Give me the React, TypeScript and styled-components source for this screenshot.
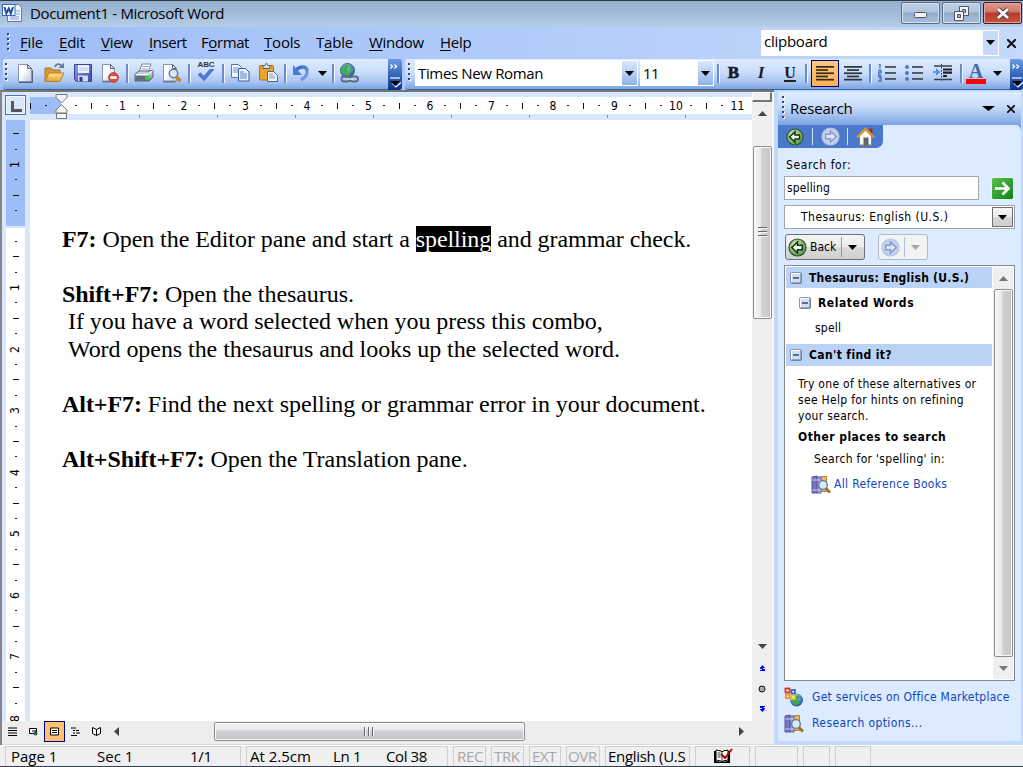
import React from "react";
import styled, { createGlobalStyle, css } from "styled-components";

const ui = `"Open Sans", "Noto Sans", sans-serif`;
const tahoma = `"DejaVu Sans Condensed", "DejaVu Sans", sans-serif`;

const Global = createGlobalStyle`
  *{box-sizing:border-box}
  body{margin:0;overflow:hidden;background:#efefef;color:#000}
  svg{display:block;flex:none}
`;

const Window = styled.div`
  width:1023px;height:767px;display:flex;flex-direction:column;overflow:hidden;font-family:${ui};
  white-space:nowrap;
`;

/* ---------- shared pieces ---------- */
const Cell = styled.div<{ $w: number; $start?: boolean }>`
  width:${p => p.$w}px;flex:none;height:100%;display:flex;align-items:center;justify-content:${p => (p.$start ? "flex-start" : "center")};
`;
const Spacer = styled.div`flex:1;`;
const Label = styled.span<{ $size?: number; $ls?: number; $x?: number; $w?: number; $color?: string; $bold?: boolean }>`
  font-size:${p => p.$size ?? 15}px;letter-spacing:${p => p.$ls ?? 0}px;
  ${p => p.$x !== undefined && css`margin-left:${p.$x}px;`}
  ${p => p.$w !== undefined && css`width:${p.$w}px;flex:none;`}
  ${p => p.$color && css`color:${p.$color};`}
  ${p => p.$bold && css`font-weight:bold;`}
`;
const Caret = ({ w = 9, c = "#000" }: { w?: number; c?: string }) => (
  <svg width={w} height={5} viewBox="0 0 10 5" preserveAspectRatio="none"><path d="M0 0h10L5 5z" fill={c} /></svg>
);
const Grip = ({ n = 4 }: { n?: number }) => (
  <svg width={4} height={n * 5} viewBox={`0 0 4 ${n * 5}`}>
    {Array.from({ length: n }, (_, i) => (
      <g key={i}><rect x={1} y={i * 5 + 1} width={2} height={2} fill="#fff" /><rect x={0} y={i * 5} width={2} height={2} fill="#27418f" /></g>
    ))}
  </svg>
);

/* ---------- title bar ---------- */
const TitleBar = styled.header`
  height:27px;flex:none;display:flex;align-items:flex-start;border-top:1px solid #343a44;
  background:linear-gradient(#96b0cf,#a0bad8 45%,#b5cee8);padding:0 1px 0 2px;
`;
const TitleText = styled.span`font-size:15px;line-height:25px;margin-left:8px;letter-spacing:-.33px;`;
const CaptionButton = styled.div<{ $close?: boolean }>`
  width:39px;height:22px;margin:1px 0 0 2px;border:1px solid ${p => (p.$close ? "#4a1420" : "#5b6c84")};border-radius:2px;
  box-shadow:inset 0 0 0 1px ${p => (p.$close ? "#e6a79c" : "#d2e0ef")};
  display:flex;align-items:center;justify-content:center;
  background:${p => p.$close
    ? "linear-gradient(#dc9a8c,#cf7767 45%,#b8392a 50%,#c4553f)"
    : "linear-gradient(#bfd0e4,#afc4dc 45%,#92abc9 50%,#a6bfdc)"};
`;

/* ---------- menu bar ---------- */
const MenuBar = styled.nav`
  height:32px;flex:none;display:flex;align-items:center;padding-left:7px;
  background:linear-gradient(90deg,#9ebdf7,#c5dafb);
`;
const MenuItem = styled.span<{ $w: number; $ls: number }>`
  width:${p => p.$w}px;font-size:15px;letter-spacing:${p => p.$ls}px;line-height:30px;margin-top:-2px;
  u{text-underline-offset:2px;text-decoration-thickness:1px;text-decoration-skip-ink:none}
`;
const AskBox = styled.div`
  width:238px;height:26px;background:#fff;display:flex;align-items:center;border:1px solid #fff;padding-left:2px;margin-top:-1px;
  span{margin-top:-3px}
`;
const DropPart = styled.div<{ $flat?: boolean }>`
  width:15px;height:100%;display:flex;align-items:center;justify-content:center;
  background:${p => (p.$flat ? "#c6dafa" : "linear-gradient(#dbe9fd,#8fb3ea)")};
`;

/* ---------- toolbars ---------- */
const ToolbarRow = styled.div`
  height:31px;flex:none;display:flex;background:linear-gradient(90deg,#9ebdf7,#c5dafb);padding-left:3px;
`;
const Toolbar = styled.div<{ $w: number; $gap?: number }>`
  width:${p => p.$w}px;height:31px;margin-left:${p => p.$gap ?? 0}px;display:flex;align-items:center;border-radius:3px 0 0 3px;padding-bottom:2px;
  background:linear-gradient(#dfecff,#c9dcfa 45%,#a9c5f1 75%,#7ca4e0);border-bottom:1px solid #3b619c;
`;
const Overflow = styled.div<{ $w: number }>`
  width:${p => p.$w}px;height:31px;background:linear-gradient(#6c9be8,#3566ba 50%,#07328f);border-radius:0 3px 3px 0;
  display:flex;justify-content:center;
`;
const Sep = styled.div<{ $w: number }>`
  width:${p => p.$w}px;flex:none;height:19px;display:flex;justify-content:center;
  &::before{content:"";width:2px;height:100%;background:#6a8ccb;border-right:1px solid #f1f6ff;}
`;
const ComboBox = styled.div<{ $w: number }>`
  width:${p => p.$w}px;height:26px;background:#fff;border:1px solid #fff;display:flex;align-items:center;padding-left:2px;
  span{margin-top:-1px}
`;
const Pressed = styled(Cell)`
  height:27px;border:1px solid #000080;background:linear-gradient(#fdc982,#fdb055);
`;
const Letter = styled.span<{ $kind: "b" | "i" | "u" | "a" }>`
  font:bold 17px/20px "Liberation Serif",serif;color:#1c1c1c;
  ${p => p.$kind === "b" && css`-webkit-text-stroke:.6px #1c1c1c;`}
  ${p => p.$kind === "i" && css`font-style:italic;`}
  ${p => p.$kind === "u" && css`border-bottom:2px solid #222;line-height:14px;font-size:16px;margin-top:2px;`}
  ${p => p.$kind === "a" && css`font-size:20px;line-height:15px;color:#4468a8;border-bottom:5px solid #f00;padding:0 3px;margin-top:2px;`}
`;

const Overflower = ({ w }: { w: number }) => (
  <Overflow $w={w}>
    <svg width={12} height={31} viewBox="0 0 12 31">
      <path d="M1.500 5.500l2 2-2 2M5.500 5.500l2 2-2 2" fill="none" stroke="#fff" strokeWidth={1.400} />
      <path d="M1 19h10" stroke="#fff" strokeWidth={1.200} /><path d="M3 24l4 4 5-4.500" stroke="#fff" fill="none" strokeWidth={1.200} /><path d="M1 22h10l-5 5z" fill="#000" />
    </svg>
  </Overflow>
);

const Svg = ({ w = 22, h = 22, children }: { w?: number; h?: number; children: React.ReactNode }) => (
  <svg width={w} height={h} viewBox={`0 0 ${w} ${h}`}>{children}</svg>
);
const DefsSvg = styled.svg`position:absolute;`;
const Defs = () => (
  <DefsSvg width={0} height={0}>
    <defs>
      <linearGradient id="pg" x1="0" y1="0" x2="1" y2="1"><stop offset=".4" stopColor="#fff" /><stop offset="1" stopColor="#b9c9e4" /></linearGradient>
      <linearGradient id="fold" x1="0" y1="0" x2="0" y2="1"><stop offset="0" stopColor="#ffe38f" /><stop offset="1" stopColor="#e2a02d" /></linearGradient>
      <linearGradient id="sv" x1="0" y1="0" x2="1" y2="1"><stop offset="0" stopColor="#8e9df0" /><stop offset="1" stopColor="#3b47ab" /></linearGradient>
      <linearGradient id="gr" x1="0" y1="0" x2="1" y2="1"><stop offset="0" stopColor="#5fc154" /><stop offset="1" stopColor="#068315" /></linearGradient>
      <linearGradient id="metal" x1="0" y1="0" x2="0" y2="1"><stop offset="0" stopColor="#e8ebf1" /><stop offset="1" stopColor="#717b8e" /></linearGradient>
      <linearGradient id="undo" x1="0" y1="0" x2="1" y2="1"><stop offset="0" stopColor="#2f65cc" /><stop offset="1" stopColor="#7ea7ea" /></linearGradient>
      <radialGradient id="ball" cx=".4" cy=".35" r=".7"><stop offset="0" stopColor="#d4efba" /><stop offset="1" stopColor="#4a9640" /></radialGradient>
      <radialGradient id="globe" cx=".4" cy=".3" r=".7"><stop offset="0" stopColor="#9ed2f5" /><stop offset="1" stopColor="#2457a5" /></radialGradient>
    </defs>
  </DefsSvg>
);

const NewIcon = () => (
  <Svg><path d="M5 20h13V8" fill="none" stroke="#4c5a74" strokeWidth={1.800} /><path d="M4.500 2.500h9l4 4v13h-13z" fill="url(#pg)" stroke="#8793ac" /><path d="M13.500 2.500v4h4z" fill="#dfe7f3" stroke="#56637b" /></Svg>
);
const OpenIcon = () => (
  <Svg><path d="M2 19V6h6l2 2h7v11z" fill="#d69a32" stroke="#a97724" /><path d="M2 19.500L6 11h15l-4 8.500z" fill="url(#fold)" stroke="#b58029" />
    <path d="M12 5c1-3.500 5-4 7 0" fill="none" stroke="#617ba8" strokeWidth={1.800} /><path d="M15.500 6h5.500V.8z" fill="#617ba8" /></Svg>
);
const SaveIcon = () => (
  <Svg><path d="M2.500 2.500h17v17h-15l-2-2z" fill="url(#sv)" stroke="#3a4394" /><rect x={6} y={3} width={11} height={8} fill="#eef1fd" /><path d="M7 6h9M7 8h9" stroke="#bdc4e6" /><rect x={6} y={13.500} width={10} height={6} fill="#d7daea" /><rect x={7.500} y={15} width={3} height={4.500} fill="#30398d" /></Svg>
);
const PermissionIcon = () => (
  <Svg><path d="M3.500 19.500h8" stroke="#4c5a74" strokeWidth={1.800} /><path d="M3.500 2.500h8l4 4v12.500h-12z" fill="url(#pg)" stroke="#8793ac" /><path d="M11.500 2.500v4h4z" fill="#dfe7f3" stroke="#56637b" /><circle cx={14.500} cy={15.500} r={4.800} fill="#e1513a" stroke="#a83426" /><rect x={11.200} y={14.300} width={6.600} height={2.500} fill="#fff" /></Svg>
);
const PrintIcon = () => (
  <Svg><path d="M6 10L9 2h9l-3 8z" fill="#f8fafd" stroke="#7b86a0" /><path d="M9.500 4.500h6M8.500 7h6" stroke="#93a2c2" /><path d="M2 12l4-3h11l3-1v7l-4 4H2z" fill="url(#metal)" stroke="#555f74" /><path d="M2.500 12.500h13l4-4" stroke="#fff" fill="none" /><rect x={3} y={14} width={12.500} height={4.500} fill="#646e80" /><rect x={12} y={14.500} width={4} height={3} fill="#2ae01c" /></Svg>
);
const PreviewIcon = () => (
  <Svg><path d="M2.500 19.500h12" stroke="#4c5a74" strokeWidth={1.800} /><path d="M2.500 2.500h9l4 4v12.500h-13z" fill="url(#pg)" stroke="#8793ac" /><path d="M11.500 2.500v4h4z" fill="#dfe7f3" stroke="#56637b" /><circle cx={12.500} cy={11.500} r={4.200} fill="#d9ebfa" stroke="#6f7c90" strokeWidth={1.500} /><path d="M15.500 15l4 4" stroke="#c88428" strokeWidth={3.500} /></Svg>
);
const Abc = styled.span`font:bold 8px/8px "Liberation Sans",sans-serif;letter-spacing:-.1px;color:#333;margin-top:-3px;`;
const SpellWrap = styled.div`display:flex;flex-direction:column;align-items:center;`;
const SpellIcon = () => (
  <SpellWrap><Abc>ABC</Abc><svg width={20} height={13} viewBox="0 0 20 13"><path d="M3 4.500l5 5L17 -1" fill="none" stroke="#4979d2" strokeWidth={3.600} /></svg></SpellWrap>
);
const CopyIcon = () => (
  <Svg><path d="M2.500 2.500h7l3 3v10h-10z" fill="#eff5ff" stroke="#5877b5" /><path d="M4 6h5M4 8h6M4 10h6" stroke="#7193d0" /><path d="M9.500 6.500h7l3.500 3.500v9h-10.500z" fill="#eaf2ff" stroke="#385ba5" /><path d="M11 10h4M11 12h7M11 14h7M11 16h7" stroke="#5a80c4" /></Svg>
);
const PasteIcon = () => (
  <Svg><rect x={2.500} y={3.500} width={14} height={14.500} rx={1} fill="#eaa629" stroke="#a7701c" /><path d="M6 6.500h7V3.500h-2L9.500 1 8 3.500H6z" fill="#dcdfe8" stroke="#56637b" /><path d="M10.500 9.500h6l4 4v6h-10z" fill="#eff3fb" stroke="#59647a" /><path d="M12 12h4M12 14h6M12 16h6" stroke="#8e9cb8" /></Svg>
);
const UndoIcon = () => <Svg><path d="M5 8c4-4 10-4 11 0s-2 8-6 10" fill="none" stroke="url(#undo)" strokeWidth={3.400} /><path d="M2 3v10h9z" fill="#4b7ddb" /></Svg>;
const LinkIcon = () => (
  <Svg><circle cx={9.500} cy={8.500} r={7} fill="url(#globe)" stroke="#326396" /><path d="M4 6c3-4 6-4 7-2l-2 4 3 3-2 4-4-4-3-1zM12.500 4l3 4-2 2-2-2z" fill="#44af45" /><rect x={3.500} y={14.500} width={8} height={5} rx={2.500} fill="none" stroke="#5d6b80" strokeWidth={1.800} /><rect x={12} y={14.500} width={8} height={5} rx={2.500} fill="none" stroke="#5d6b80" strokeWidth={1.800} /><path d="M9 17h6" stroke="#dbe3ee" strokeWidth={1.500} /></Svg>
);
const Lines = ({ center }: { center?: boolean }) => (
  <Svg w={18} h={17}>{[0, 1, 2, 3, 4].map(i => {
    const w = i % 2 ? 12 : 18;
    return <rect key={i} x={center ? (18 - w) / 2 : 0} y={1 + i * 3.200} width={w} height={1.700} fill={center ? "#2c3038" : "#3a2b18"} />;
  })}</Svg>
);
const ListIcon = ({ numbered }: { numbered?: boolean }) => (
  <Svg w={18} h={18}>{[2, 8, 14].map((y, i) => (
    <g key={y}><rect x={7} y={y + .2} width={11} height={1.500} fill="#333" />
      {numbered ? <path d={i === 0 ? "M.5 0h1.500v4.500" : i === 1 ? "M0 6.500h3v2H.5v2.500H3" : "M0 12.500h3v4.500H0M1 14.500h2"} fill="none" stroke="#4f74bb" strokeWidth={1.400} /> : <circle cx={2} cy={y + 1} r={1.900} fill="#4f74bb" />}</g>
  ))}</Svg>
);
const IndentIcon = () => (
  <Svg w={20} h={18}><path d="M1 2h18M1 15.500h18" stroke="#3a3f49" strokeWidth={1.500} /><path d="M10 5.500h9M10 8.700h9M10 12h4" stroke="#222" strokeWidth={2.200} /><path d="M8.500 0v18" stroke="#333" strokeDasharray="1.500 1.500" /><path d="M0 7h3V4l4.500 4-4.500 4V9H0z" fill="#5e8fe0" /></Svg>
);
const WordLogo = () => (
  <svg width={20} height={22} viewBox="0 0 20 22"><path d="M5.500 3.500h11l3 3v14h-14z" fill="#eef4fd" stroke="#5d7cae" /><path d="M8 16h9M8 18h9M14 10h4M14 13h4" stroke="#7ea0d2" /><rect x={.5} y={3.500} width={12.500} height={11} fill="#fff" stroke="#3c65b4" /><path d="M2.500 6l1.800 6.500L6.800 7.500 8.800 12.500l2.200-6.500" fill="none" stroke="#2450a4" strokeWidth={2} /></svg>
);

/* ---------- work area ---------- */
const Work = styled.div`height:655px;flex:none;display:flex;background:#c1d9fb;`;
const DocFrame = styled.section`
  width:774px;display:flex;flex-direction:column;border-top:2px solid #76756f;border-left:2px solid #85858a;background:#d8e7fc;
`;
const DocMain = styled.div`display:flex;height:629px;`;
const DocColumn = styled.div`width:750px;display:flex;flex-direction:column;`;
const RulerRow = styled.div`height:28px;display:flex;padding:3px 0 0 3px;align-items:flex-start;`;
const TabBox = styled.div`
  width:21px;height:20px;border:1px solid #4a72c4;box-shadow:inset 0 0 0 1px #f4f8ff;display:flex;align-items:center;justify-content:center;padding:3px 0 0 1px;
  &::before{content:"";width:8px;height:8px;border-left:3px solid #555;border-bottom:3px solid #555}
`;
const HRulerWrap = styled.div`width:722px;margin-left:4px;`;
const HRuler = styled.div`
  height:17px;margin-top:2px;display:flex;overflow:hidden;background:linear-gradient(90deg,#9ebdf7 31px,#fff 31px);
  &>:first-child{margin-left:-7.500px}
  span{margin-top:1px}
`;
const Mark = styled.div<{ $v?: boolean }>`
  flex:none;display:flex;align-items:center;justify-content:center;font:12px/15px ${tahoma};font-stretch:condensed;
  ${p => (p.$v ? "height:15.4px;width:19px;" : "width:15.375px;height:17px;")}
  span{${p => p.$v && "transform:rotate(-90deg);"}}
`;
const Dot = styled.i`width:2px;height:1px;background:#222;`;
const Tick = styled.i<{ $v?: boolean }>`background:#111;${p => (p.$v ? "width:6px;height:1px;" : "width:1px;height:6px;")}`;
const TabTicks = styled.div`height:3px;margin-top:1px;background:repeating-linear-gradient(90deg,#8b8f98 0 1px,transparent 1px 78px);margin-left:109px;`;
const IndentMark = styled.div`position:absolute;left:55px;top:93px;`;
const DocBody = styled.div`display:flex;height:601px;background:#fff;`;
const VRuler = styled.div`
  width:28px;height:601px;overflow:hidden;border-left:4px solid #d8e7fc;border-right:5px solid #d8e7fc;flex:none;
  background:linear-gradient(#9ebdf7 106px,#d8e7fc 106px 108px,#fff 108px);padding-top:6px;
`;
const PageArea = styled.article`
  padding:105.500px 0 0 32px;font:24px/27.500px "Liberation Serif",serif;
`;
const Line = styled.p<{ $indent?: boolean }>`
  margin:0;height:27.500px;letter-spacing:-.06px;padding-left:${p => (p.$indent ? 6 : 0)}px;
`;
const Selected = styled.span`background:#000;color:#fff;`;

const VScroll = styled.div`
  width:22px;height:100%;background:#efefef;display:flex;flex-direction:column;align-items:center;border-right:2px solid #f7f7f7;
`;
const SplitBox = styled.div`width:20px;height:11px;border:1px solid #fff;border-right:2px solid #777;border-bottom:2px solid #777;background:#efefef;`;
const Slot = styled.div<{ $h: number }>`height:${p => p.$h}px;display:flex;align-items:center;justify-content:center;flex:none;`;
const Thumb = styled.div<{ $w: number; $h: number; $vertical?: boolean }>`
  width:${p => p.$w}px;height:${p => p.$h}px;border:1px solid #8d8d8f;border-radius:2px;display:flex;align-items:center;justify-content:center;flex:none;
  background:linear-gradient(${p => (p.$vertical ? "90deg" : "180deg")},#f5f5f5,#e9e9eb 40%,#d1d2d5 45%,#c4c5ca);
  box-shadow:inset 0 0 0 1px #fafafa;
`;
const Ridge = styled.div<{ $vertical?: boolean }>`
  ${p => (p.$vertical ? "width:9px;height:11px;" : "width:11px;height:9px;")}
  background:repeating-linear-gradient(${p => (p.$vertical ? "180deg" : "90deg")},#66686c 0 1px,#f6f6f6 1px 2px,transparent 2px 4px);
`;
const BottomBar = styled.div`height:24px;display:flex;align-items:center;background:#ededed;padding-bottom:2px;width:772px;border-bottom:1px solid #dadada;`;
const ViewCell = styled.div<{ $on?: boolean }>`
  width:21px;height:21px;display:flex;align-items:center;justify-content:center;
  ${p => p.$on && css`border:1px solid #000080;background:#ffc06f;`}
`;
const BrowseMark = ({ down }: { down?: boolean }) => (
  <svg width={5} height={6} viewBox="0 0 5 6"><path d={down ? "M0 0h5v1H3.500v1H5L2.500 6 0 3.500V3h2V2H0zM0 3h5L2.500 6z" : "M2.500 0L5 3H3v1h2v2H0V5h2V4H0V3z"} fill="#00e" /></svg>
);

const Marks = ({ from, to, v }: { from: number; to: number; v?: boolean }) => (
  <>{Array.from({ length: to - from + 1 }, (_, i) => {
    const k = from + i, m = Math.abs(k) % 4;
    return <Mark key={k} $v={v}>{k === 0 ? null : m === 0 ? <span>{Math.abs(k / 4)}</span> : m === 2 ? <Tick $v={v} /> : <Dot />}</Mark>;
  })}</>
);

/* ---------- research pane ---------- */
const Pane = styled.aside`
  width:243px;margin:2px 0 0 4px;height:649px;background:#dcebff;display:flex;flex-direction:column;font-family:${tahoma};font-stretch:condensed;font-size:12px;
`;
const PaneHead = styled.div`
  height:33px;display:flex;align-items:center;padding:0 6px 0 4px;background:linear-gradient(#dfecff,#c8dcfa 45%,#7ba3e0);flex:none;
`;
const PaneTitle = styled.span`font:15px/20px ${ui};font-stretch:normal;letter-spacing:-.2px;margin:-1px 0 0 4px;`;
const PaneNavRow = styled.div`height:23px;flex:none;background:linear-gradient(#7ba3e0,#7ba3e0) top right/6px 6px no-repeat;&>div{border-top-right-radius:6px;background:#dcebff;height:23px}`;
const PaneNav = styled.div`&&{width:105px;height:23px;background:#4a79cb;border-radius:0 0 7px 0;display:flex;align-items:center;}`;
const NavSep = styled.div`width:1px;height:17px;background:#d6e4fb;`;
const PaneBody = styled.div`padding:0 6px;display:flex;flex-direction:column;height:593px;`;
const Row = styled.div<{ $h: number; $mt?: number; $pl?: number }>`
  display:flex;align-items:center;flex:none;height:${p => p.$h}px;margin-top:${p => p.$mt ?? 0}px;padding-left:${p => p.$pl ?? 0}px;
`;
const Field = styled.div<{ $w: number; $pl: number }>`
  width:${p => p.$w}px;height:24px;border:1px solid #a4a5a9;background:#fff;display:flex;align-items:center;padding:0 1px 0 ${p => p.$pl}px;
`;
const ComboButton = styled.div`
  width:21px;height:20px;border:1px solid #707070;background:linear-gradient(#f4f4f4,#ebebeb 48%,#d6d6d6 52%,#cfcfcf);display:flex;align-items:center;justify-content:center;
`;
const SplitButton = styled.div<{ $w: number; $off?: boolean }>`
  width:${p => p.$w}px;height:26px;border:1px solid ${p => (p.$off ? "#b4b8c0" : "#707070")};border-radius:3px;display:flex;align-items:center;
  background:${p => (p.$off ? "#f1f3f5" : "linear-gradient(#f4f4f4,#ececec 48%,#dadada 52%,#d0d0d0)")};padding-left:2px;
`;
const SplitLine = styled.div<{ $off?: boolean }>`width:1px;height:20px;background:${p => (p.$off ? "#b5c0d4" : "#7f9cc5")};`;
const Results = styled.div`width:231px;height:416px;border:1px solid #828790;background:#fff;margin-top:5px;display:flex;padding:1px;flex:none;`;
const ResultList = styled.div`width:206px;`;
const Band = styled(Row)`background:#bad2f5;padding-left:4px;`;
const Para = styled.p`margin:10px 0 0 12px;line-height:16px;white-space:pre;letter-spacing:.31px;`;
const ResultScroll = styled.div`width:20px;margin-left:1px;background:#efefef;display:flex;flex-direction:column;align-items:center;`;

const Collapse = () => (
  <svg width={12} height={12} viewBox="0 0 12 12"><rect x={.5} y={.5} width={11} height={11} rx={1.500} fill="#d3ddeb" stroke="#8496b0" /><path d="M11 1.500v9.500H1.500" fill="none" stroke="#5c7291" /><path d="M1.500 10V1.500H10" fill="none" stroke="#fff" /><path d="M3 6h6" stroke="#2c4a78" strokeWidth={1.500} /></svg>
);
const RoundArrow = ({ right, off, size = 19 }: { right?: boolean; off?: boolean; size?: number }) => (
  <svg width={size} height={size} viewBox="0 0 19 19"><circle cx={9.500} cy={9.500} r={8.500} fill={off ? "#c4d1ea" : "url(#ball)"} stroke={off ? "#b3c3e2" : "#33502f"} strokeWidth={1.200} />
    <path transform={right ? "matrix(-1 0 0 1 19 0)" : undefined} d="M3.800 9.500L9.500 4v3.300h4.800v4.400H9.500V15z" fill={off ? "#dfe8f7" : "#eff9e9"} stroke={off ? "#869cc9" : "#1d2c20"} strokeWidth={1.500} /></svg>
);
const HomeIcon = () => (
  <svg width={19} height={19} viewBox="0 0 19 19"><rect x={13.500} y={1.500} width={3} height={6} fill="#9c3023" /><path d="M3.500 9v9h12V9l-6-6z" fill="#fbfaf3" stroke="#9a834c" /><path d="M1 10.500l8.500-9 8.500 9" fill="none" stroke="#d9992c" strokeWidth={2} /><rect x={8} y={11} width={4} height={7} fill="#456a9e" stroke="#79613a" /></svg>
);
const GoIcon = () => (
  <svg width={23} height={23} viewBox="0 0 23 23"><rect x={.5} y={.5} width={22} height={22} rx={2} fill="url(#gr)" stroke="#eaf7e8" /><path d="M4 11.500h13M11.500 5.500l6 6-6 6" fill="none" stroke="#fff" strokeWidth={2.600} /></svg>
);
const BooksIcon = () => (
  <svg width={20} height={19} viewBox="0 0 20 19"><path d="M1 2l5-1v17H1z" fill="#7775c5" stroke="#54529b" /><path d="M6 2h4v16H6z" fill="#9997de" stroke="#605eac" /><path d="M10.500 1.500h5v15h-5z" fill="#e3bd5b" stroke="#a58438" /><path d="M1 5h9M1 15h9" stroke="#c7c6f2" /><circle cx={12} cy={10} r={4.300} fill="#d5ecf8" stroke="#65788e" strokeWidth={1.300} /><path d="M15 13.500l4 4" stroke="#a66f24" strokeWidth={3} /></svg>
);
const MarketIcon = () => (
  <svg width={20} height={20} viewBox="0 0 20 20"><circle cx={12.500} cy={13} r={6.500} fill="url(#globe)" /><path d="M8 12c3-4 6-4 8-2l-3 3 2 3-3 3-3-3z" fill="#45a83e" /><g fill="#fff" strokeWidth={1.800}><rect x={1.500} y={1.500} width={4} height={4} stroke="#e12b20" /><rect x={7.500} y={3} width={3.500} height={3.500} stroke="#3b66c5" /><rect x={2} y={7.500} width={3.500} height={3.500} stroke="#ee8e27" /><rect x={7.500} y={8.500} width={3.500} height={3.500} stroke="#e0c42e" /></g></svg>
);

/* ---------- status bar ---------- */
const StatusBar = styled.footer`
  height:22px;flex:none;display:flex;background:#efefef;border-top:1px solid #fff;border-bottom:1px solid #39404d;padding-left:5px;
`;
const StatusBox = styled.div<{ $w: number; $gap?: number; $off?: boolean }>`
  width:${p => p.$w}px;margin-right:5px;height:20px;border:1px solid #cfcfcf;border-bottom:0;display:flex;align-items:center;overflow:hidden;
  font-size:15px;padding-left:${p => p.$gap ?? 4}px;color:${p => (p.$off ? "#a6a6a6" : "#000")};
`;
const StatusText = styled.span<{ $w?: number; $ls?: number }>`width:${p => (p.$w ? p.$w + "px" : "auto")};letter-spacing:${p => p.$ls ?? -0.35}px;flex:none;line-height:18px;margin-top:-1px;`;

export default function App() {
  const link = "#0f46bd";
  const menus: [string, string, string, number, number][] = [
    ["", "F", "ile", 39, -0.2], ["", "E", "dit", 42, -0.2], ["", "V", "iew", 48, -0.3], ["", "I", "nsert", 52, -0.45], ["F", "o", "rmat", 63, -0.4],
    ["", "T", "ools", 52, -0.2], ["T", "a", "ble", 53, -0.2], ["", "W", "indow", 71, -0.3], ["", "H", "elp", 40, -0.3],
  ];
  return (
    <Window>
      <Global /><Defs />
      <TitleBar>
        <WordLogo /><TitleText>Document1 - Microsoft Word</TitleText><Spacer />
        <CaptionButton><svg width={13} height={10}><rect x={.5} y={4.500} width={12} height={5} rx={1} fill="#f5f5f5" stroke="#4d5564" /></svg></CaptionButton>
        <CaptionButton><svg width={15} height={15}><path d="M5.500.5h9v9h-9z" fill="#f4f4f4" stroke="#4d5564" /><path d="M8.500 3.500h3v3h-3z" fill="#9fb3cb" stroke="#4d5564" /><path d="M.5 5.500h9v9h-9z" fill="#f4f4f4" stroke="#4d5564" /><path d="M3.500 8.500h3v3h-3z" fill="#9fb3cb" stroke="#4d5564" /></svg></CaptionButton>
        <CaptionButton $close><svg width={16} height={13} viewBox="0 0 16 13"><path d="M3 2l10 9M13 2L3 11" stroke="#4e3b43" strokeWidth={4.800} /><path d="M3 2l10 9M13 2L3 11" stroke="#f7f7f7" strokeWidth={3} /></svg></CaptionButton>
      </TitleBar>
      <MenuBar>
        <Cell $w={13} $start><Grip n={4} /></Cell>
        {menus.map(([a, u, b, w, ls]) => <MenuItem key={u} $w={w} $ls={ls}>{a}<u>{u}</u>{b}</MenuItem>)}
        <Spacer />
        <AskBox><Label $ls={-.25}>clipboard</Label><Spacer /><DropPart $flat><Caret /></DropPart></AskBox>
        <Cell $w={24}><svg width={9} height={9}><path d="M0 0l9 9M9 0L0 9" stroke="#111" strokeWidth={2} /></svg></Cell>
      </MenuBar>
      <ToolbarRow>
        <Toolbar $w={385}>
          <Cell $w={8}><Grip /></Cell><Cell $w={28}><NewIcon /></Cell><Cell $w={30}><OpenIcon /></Cell><Cell $w={27}><SaveIcon /></Cell><Cell $w={28}><PermissionIcon /></Cell>
          <Sep $w={6} /><Cell $w={28}><PrintIcon /></Cell><Cell $w={28}><PreviewIcon /></Cell><Sep $w={6} /><Cell $w={28}><SpellIcon /></Cell><Sep $w={6} />
          <Cell $w={28}><CopyIcon /></Cell><Cell $w={28}><PasteIcon /></Cell><Sep $w={6} /><Cell $w={27}><UndoIcon /></Cell><Cell $w={14}><Caret /></Cell><Sep $w={8} /><Cell $w={24}><LinkIcon /></Cell>
        </Toolbar>
        <Overflower w={14} />
        <Toolbar $w={605} $gap={3}>
          <Cell $w={10}><Grip /></Cell>
          <ComboBox $w={223}><Label $ls={-.35}>Times New Roman</Label><Spacer /><DropPart><Caret /></DropPart></ComboBox>
          <Cell $w={2} />
          <ComboBox $w={74}><Label $ls={-.6}>11</Label><Spacer /><DropPart><Caret /></DropPart></ComboBox>
          <Sep $w={9} /><Cell $w={21}><Letter $kind="b">B</Letter></Cell><Cell $w={34}><Letter $kind="i">I</Letter></Cell><Cell $w={24}><Letter $kind="u">U</Letter></Cell><Sep $w={9} />
          <Pressed $w={28}><Lines /></Pressed><Cell $w={28}><Lines center /></Cell><Sep $w={7} /><Cell $w={26}><ListIcon numbered /></Cell><Cell $w={28}><ListIcon /></Cell><Cell $w={30}><IndentIcon /></Cell>
          <Sep $w={6} /><Cell $w={24}><Letter $kind="a">A</Letter></Cell><Cell $w={18}><Caret /></Cell>
        </Toolbar>
        <Overflower w={13} />
      </ToolbarRow>

      <Work>
        <DocFrame>
          <DocMain>
            <DocColumn>
              <RulerRow>
                <TabBox />
                <HRulerWrap><HRuler><Marks from={-2} to={44} /></HRuler><TabTicks /></HRulerWrap>
              </RulerRow>
              <DocBody>
                <VRuler><Marks v from={-6} to={32} /></VRuler>
                <PageArea>
                  <Line><b>F7:</b> Open the Editor pane and start a <Selected>spelling</Selected> and grammar check.</Line>
                  <Line />
                  <Line><b>Shift+F7:</b> Open the thesaurus.</Line>
                  <Line $indent>If you have a word selected when you press this combo,</Line>
                  <Line $indent>Word opens the thesaurus and looks up the selected word.</Line>
                  <Line />
                  <Line><b>Alt+F7:</b> Find the next spelling or grammar error in your document.</Line>
                  <Line />
                  <Line><b>Alt+Shift+F7:</b> Open the Translation pane.</Line>
                </PageArea>
              </DocBody>
            </DocColumn>
            <VScroll>
              <SplitBox />
              <Slot $h={22}><svg width={9} height={5}><path d="M0 5h9L4.500 0z" fill="#444" /></svg></Slot>
              <Slot $h={22} />
              <Thumb $vertical $w={19} $h={173}><Ridge $vertical /></Thumb>
              <Slot $h={318} />
              <Slot $h={18}><Caret c="#444" /></Slot>
              <Slot $h={26}><BrowseMark /></Slot>
              <Slot $h={16}><svg width={8} height={8}><circle cx={4} cy={4} r={3} fill="#aaa" stroke="#111" /></svg></Slot>
              <Slot $h={24}><BrowseMark down /></Slot>
            </VScroll>
          </DocMain>
          <BottomBar>
            <ViewCell><svg width={9} height={9}><path d="M0 1h9M0 3.500h9M0 6h9M0 8.500h9" stroke="#000" /></svg></ViewCell>
            <ViewCell><svg width={9} height={9}><path d="M.5 1.500h7v5h-7zM3 4h4v4" fill="#fff" stroke="#000" /><circle cx={6.500} cy={6.500} r={2} fill="#275f45" /></svg></ViewCell>
            <ViewCell $on><svg width={9} height={9}><path d="M.5 1h8v7h-8z" fill="#fff" stroke="#000" /><path d="M2 3.500h5M2 5.500h5" stroke="#000" /></svg></ViewCell>
            <ViewCell><svg width={9} height={9}><path d="M0 1h5M2 3.500h2M5 3.500h3M2 6h2M5 6h4M0 8.500h6" stroke="#000" /></svg></ViewCell>
            <ViewCell><svg width={9} height={9}><path d="M.5.500l4 2 4-2v6l-4 2-4-2zM4.500 2.500v6" fill="#fff" stroke="#000" /></svg></ViewCell>
            <Cell $w={19}><svg width={5} height={9}><path d="M5 0v9L0 4.500z" fill="#444" /></svg></Cell>
            <Cell $w={88} />
            <Thumb $w={311} $h={19}><Ridge /></Thumb>
            <Cell $w={207} />
            <Cell $w={18}><svg width={5} height={9}><path d="M0 0v9l5-4.500z" fill="#444" /></svg></Cell>
          </BottomBar>
        </DocFrame>
        <Pane>
          <PaneHead><Grip n={5} /><PaneTitle>Research</PaneTitle><Spacer /><Caret w={13} /><Cell $w={12} /><svg width={8} height={8}><path d="M0 0l8 8M8 0L0 8" stroke="#111" strokeWidth={1.800} /></svg></PaneHead>
          <PaneNavRow><div><PaneNav><Cell $w={34}><RoundArrow size={18} /></Cell><NavSep /><Cell $w={34}><RoundArrow right off /></Cell><NavSep /><Cell $w={34}><HomeIcon /></Cell></PaneNav></div></PaneNavRow>
          <PaneBody>
            <Row $h={18} $mt={8} $pl={2}><Label $size={12} $ls={.6}>Search for:</Label></Row>
            <Row $h={24} $mt={2}><Field $w={195} $pl={2}><Label $size={12} $ls={.15}>spelling</Label></Field><Cell $w={12} /><GoIcon /></Row>
            <Row $h={24} $mt={5}><Field $w={231} $pl={16}><Label $size={12} $ls={.47}>Thesaurus: English (U.S.)</Label><Spacer /><ComboButton><Caret /></ComboButton></Field></Row>
            <Row $h={26} $mt={5} $pl={1}>
              <SplitButton $w={80}><RoundArrow /><Label $size={12} $x={3} $w={31}>Back</Label><SplitLine /><Cell $w={20}><Caret /></Cell></SplitButton>
              <Cell $w={13} />
              <SplitButton $w={50} $off><RoundArrow right off /><Cell $w={4} /><SplitLine $off /><Cell $w={20}><Caret c="#a8a8a0" /></Cell></SplitButton>
            </Row>
            <Results>
              <ResultList>
                <Band $h={21}><Collapse /><Label $size={12} $bold $x={7} $ls={.25}>Thesaurus: English (U.S.)</Label></Band>
                <Row $h={30} $pl={13}><Collapse /><Label $size={12} $bold $x={7} $ls={.55}>Related Words</Label></Row>
                <Row $h={20} $pl={29}><Label $size={12} $ls={.2}>spell</Label></Row>
                <Band $h={22} $mt={6}><Collapse /><Label $size={12} $bold $x={7} $ls={.37}>Can't find it?</Label></Band>
                <Para>{"Try one of these alternatives or\nsee Help for hints on refining\nyour search."}</Para>
                <Row $h={20} $mt={3} $pl={12}><Label $size={12} $bold $ls={.47}>Other places to search</Label></Row>
                <Row $h={20} $mt={2} $pl={28}><Label $size={12} $ls={.3}>Search for 'spelling' in:</Label></Row>
                <Row $h={22} $mt={4} $pl={25}><BooksIcon /><Label $size={12} $x={3} $color={link} $ls={.33}>All Reference Books</Label></Row>
              </ResultList>
              <ResultScroll>
                <Slot $h={22}><svg width={9} height={5}><path d="M0 5h9L4.500 0z" fill="#777" /></svg></Slot>
                <Thumb $vertical $w={19} $h={368} />
                <Slot $h={22}><Caret c="#777" /></Slot>
              </ResultScroll>
            </Results>
            <Row $h={22} $mt={5}><MarketIcon /><Label $size={12} $x={8} $color={link} $ls={.27}>Get services on Office Marketplace</Label></Row>
            <Row $h={22} $mt={4}><BooksIcon /><Label $size={12} $x={8} $color={link} $ls={.4}>Research options...</Label></Row>
          </PaneBody>
        </Pane>
      </Work>

      <StatusBar>
        <StatusBox $w={236} $gap={5}><StatusText $w={86} $ls={0}>Page 1</StatusText><StatusText $w={93} $ls={0}>Sec 1</StatusText><StatusText>1/1</StatusText></StatusBox>
        <StatusBox $w={202} $gap={3}><StatusText $w={83} $ls={0}>At 2.5cm</StatusText><StatusText $w={53}>Ln 1</StatusText><StatusText $ls={-.4}>Col 38</StatusText></StatusBox>
        <StatusBox $w={33} $gap={3} $off><StatusText>REC</StatusText></StatusBox>
        <StatusBox $w={33} $gap={2} $off><StatusText>TRK</StatusText></StatusBox>
        <StatusBox $w={32} $gap={2} $off><StatusText>EXT</StatusText></StatusBox>
        <StatusBox $w={34} $gap={1} $off><StatusText>OVR</StatusText></StatusBox>
        <StatusBox $w={85} $gap={2}><StatusText $ls={-.3}>English (U.S</StatusText></StatusBox>
        <StatusBox $w={55} $gap={17}><svg width={20} height={17} viewBox="0 0 20 17"><path d="M1 3h2v10l6 1 6-1V3h2v12H9l-8 0z" fill="#000" /><path d="M3 2l5 1 1 1 1-1 5-1v10l-5 1-1 1-1-1-5-1z" fill="#fff" stroke="#000" /><path d="M9 4v9M4.500 5h3M4.500 7h3M4.500 9h3M11 9h3" stroke="#000" strokeWidth={.8} /><path d="M8 6l4 4 7-9" fill="none" stroke="#9b1010" strokeWidth={2} /></svg></StatusBox>
        <StatusBox $w={43} /><StatusBox $w={27} /><StatusBox $w={36} />
      </StatusBar>
      <IndentMark><svg width={13} height={27} viewBox="0 0 13 27"><path d="M1 1.500h11v3l-5.500 5.500L1 4.500zM6.500 11.500L12 17v3H1v-3zM1.500 20.500h10v5h-10z" fill="#f4f4f4" stroke="#777" /></svg></IndentMark>
    </Window>
  );
}
